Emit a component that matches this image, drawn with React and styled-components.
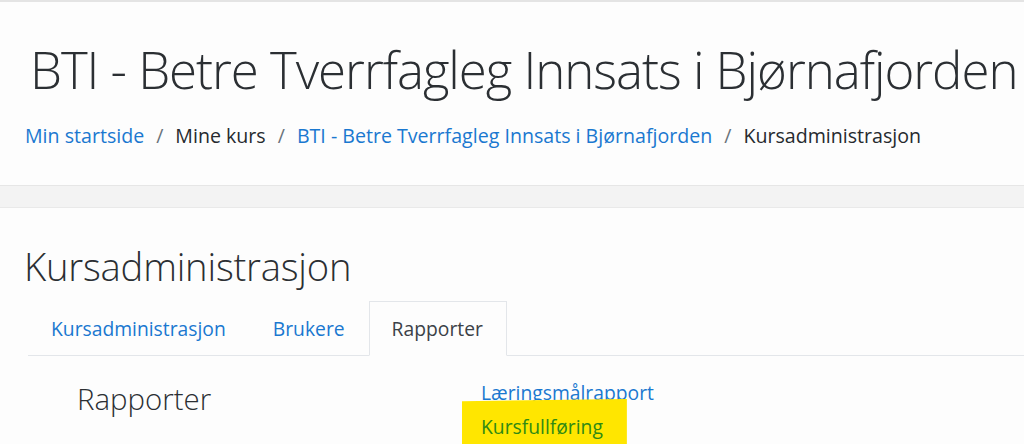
import React from "react";
import styled, { createGlobalStyle } from "styled-components";

const GlobalStyle = createGlobalStyle`
  html, body {
    margin: 0;
    padding: 0;
    background: #fdfdfd;
    font-family: "Open Sans", "Liberation Sans", sans-serif;
    color: #262a2e;
  }
  #root {
    width: 1024px;
    height: 444px;
    overflow: hidden;
  }
`;

const Page = styled.div`
  border-top: 2px solid #e4e4e4;
  height: 442px;
  display: flex;
  flex-direction: column;
`;

const HeaderCard = styled.header`
  flex-shrink: 0;
  background: #fdfdfd;
  height: 183px;
  box-sizing: border-box;
  padding: 34px 0 0 30px;
`;

const Title = styled.h1`
  margin: 0;
  font-size: 51px;
  font-weight: 300;
  line-height: 66px;
  letter-spacing: -1.05px;
  white-space: nowrap;
  color: #2b2f33;
`;

const Crumbs = styled.ol`
  list-style: none;
  margin: 20px 0 0 -5px;
  padding: 0;
  display: flex;
  align-items: center;
  font-size: 19.6px;
  line-height: 28px;
  white-space: nowrap;
`;

const Crumb = styled.li`
  display: flex;
  align-items: center;
  color: ${(p) => (p.$link ? "#1a78d0" : "#262a2e")};

  &:not(:first-child)::before {
    content: "/";
    color: #6a737b;
    padding: 0 12px;
  }
`;

const Band = styled.div`
  flex-shrink: 0;
  height: 21px;
  background: #f3f3f3;
  border-top: 1px solid #e6e6e6;
  border-bottom: 1px solid #e9e9e9;
`;

const MainCard = styled.main`
  flex: 1;
  background: #fdfdfd;
  padding: 32px 0 0 24px;
  border-bottom: 1px dotted #d8d8c8;
`;

const Heading = styled.h2`
  margin: 0;
  font-size: 38.2px;
  font-weight: 300;
  line-height: 52px;
  letter-spacing: -0.2px;
  color: #2b2f33;
`;

const Tabs = styled.ul`
  list-style: none;
  margin: 9px 0 0 4px;
  padding: 0;
  display: flex;
  border-bottom: 1px solid #e3e6ea;
`;

const Tab = styled.li`
  padding: 0 23px 0 22px;
  height: 53px;
  display: flex;
  align-items: center;
  font-size: 19.3px;
  margin-bottom: -1px;
  color: ${(p) => (p.$active ? "#3b4147" : "#1a78d0")};
  background: ${(p) => (p.$active ? "#fdfdfd" : "transparent")};
  border: 1px solid ${(p) => (p.$active ? "#e3e6ea" : "transparent")};
  border-bottom-color: ${(p) => (p.$active ? "#fdfdfd" : "transparent")};
`;

const Section = styled.section`
  display: grid;
  grid-template-columns: 404px 1fr;
  padding: 18px 0 0 53px;
`;

const SectionTitle = styled.h3`
  margin: 6px 0 0;
  font-size: 29.4px;
  font-weight: 300;
  line-height: 38px;
  color: #2b2f33;
`;

const Links = styled.div`
  display: flex;
  flex-direction: column;
  padding-top: 3px;
  font-size: 19.3px;
  line-height: 32px;
`;

const ReportLink = styled.a`
  color: #1a78d0;
  text-decoration: none;
  width: max-content;
`;

const Marked = styled(ReportLink)`
  color: #2f8a14;
  background: #ffe600;
  margin: -10px 0 0 -19px;
  padding: 12px 24px 12px 19px;
  clip-path: polygon(0 4%, 100% 0, 100% 100%, 0 100%);
`;

export default function App() {
  return (
    <>
      <GlobalStyle />
      <Page>
        <HeaderCard>
          <Title>BTI - Betre Tverrfagleg Innsats i Bjørnafjorden</Title>
          <Crumbs>
            <Crumb $link>Min startside</Crumb>
            <Crumb>Mine kurs</Crumb>
            <Crumb $link>BTI - Betre Tverrfagleg Innsats i Bjørnafjorden</Crumb>
            <Crumb>Kursadministrasjon</Crumb>
          </Crumbs>
        </HeaderCard>
        <Band />
        <MainCard>
          <Heading>Kursadministrasjon</Heading>
          <Tabs>
            <Tab>Kursadministrasjon</Tab>
            <Tab>Brukere</Tab>
            <Tab $active>Rapporter</Tab>
          </Tabs>
          <Section>
            <SectionTitle>Rapporter</SectionTitle>
            <Links>
              <ReportLink href="#">Læringsmålrapport</ReportLink>
              <Marked href="#">Kursfullføring</Marked>
            </Links>
          </Section>
        </MainCard>
      </Page>
    </>
  );
}
